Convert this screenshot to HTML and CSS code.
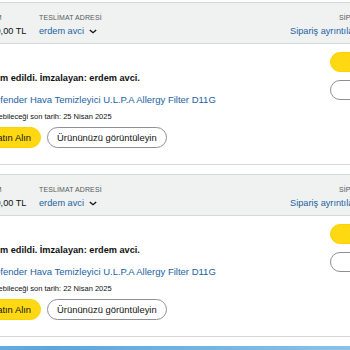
FILE: index.html
```html
<!DOCTYPE html>
<html lang="tr">
<head>
<meta charset="utf-8">
<link rel="stylesheet" href="styles.css">
</head>
<body>
<div class="page">
  <div class="order">
    <div class="order-head">
      <div class="hcol c-date"><div class="label">SİPARİŞ VERİLDİ</div><div class="val">21 Mart 2025</div></div>
      <div class="hcol c-total"><div class="label">TOPLAM</div><div class="val">12.590,00 TL</div></div>
      <div class="hcol c-ship"><div class="label">TESLİMAT ADRESİ</div><div class="val link">erdem avci <svg class="chev" viewBox="0 0 10 6" width="8" height="5"><path d="M1 1l4 3.5L9 1" fill="none" stroke="#0f1111" stroke-width="1.6"/></svg></div></div>
      <div class="hcol c-id"><div class="label id-label">SİPARİŞ # 406-1234567-7654321</div><div class="val link">Sipariş ayrıntılarını görüntüle</div></div>
    </div>
    <div class="order-body">
      <div class="main">
        <div class="status">Siparişiniz kapınıza teslim edildi. İmzalayan: erdem avci.</div>
        <div class="item">
          <div class="thumb"></div>
          <div class="info">
            <a class="title">Karcher Defender Hava Temizleyici U.L.P.A Allergy Filter D11G</a>
            <div class="return">Ürün iade edilebileceği son tarih: 25 Nisan 2025</div>
            <div class="btns">
              <span class="btn yellow">Tekrar Satın Alın</span>
              <span class="btn outline">Ürününüzü görüntüleyin</span>
            </div>
          </div>
        </div>
      </div>
      <div class="actions">
        <span class="btn yellow wide">Paket takibi</span>
        <span class="btn outline wide">İade veya değişim</span>
      </div>
    </div>
  </div>

  <div class="order">
    <div class="order-head">
      <div class="hcol c-date"><div class="label">SİPARİŞ VERİLDİ</div><div class="val">18 Mart 2025</div></div>
      <div class="hcol c-total"><div class="label">TOPLAM</div><div class="val">12.590,00 TL</div></div>
      <div class="hcol c-ship"><div class="label">TESLİMAT ADRESİ</div><div class="val link">erdem avci <svg class="chev" viewBox="0 0 10 6" width="8" height="5"><path d="M1 1l4 3.5L9 1" fill="none" stroke="#0f1111" stroke-width="1.6"/></svg></div></div>
      <div class="hcol c-id"><div class="label id-label">SİPARİŞ # 406-7654321-1234567</div><div class="val link">Sipariş ayrıntılarını görüntüle</div></div>
    </div>
    <div class="order-body">
      <div class="main">
        <div class="status">Siparişiniz kapınıza teslim edildi. İmzalayan: erdem avci.</div>
        <div class="item">
          <div class="thumb"></div>
          <div class="info">
            <a class="title">Karcher Defender Hava Temizleyici U.L.P.A Allergy Filter D11G</a>
            <div class="return">Ürün iade edilebileceği son tarih: 22 Nisan 2025</div>
            <div class="btns">
              <span class="btn yellow">Tekrar Satın Alın</span>
              <span class="btn outline">Ürününüzü görüntüleyin</span>
            </div>
          </div>
        </div>
      </div>
      <div class="actions">
        <span class="btn yellow wide">Paket takibi</span>
        <span class="btn outline wide">İade veya değişim</span>
      </div>
    </div>
  </div>
  <div class="banner"></div>
</div>
</body>
</html>
```

FILE: styles.css
```css
html, body {
  margin: 0;
  padding: 0;
  overflow: hidden;
  background: #ffffff;
}
body {
  font-family: "Liberation Sans", Arial, sans-serif;
  color: #0f1111;
}
.page {
  width: 751px;
  margin-left: -250px;
  padding-top: 2px;
}
.order {
  border: 1px solid #d5d9d9;
  border-radius: 8px;
  overflow: hidden;
  margin-bottom: 9px;
  background: #fff;
}
.order-head {
  background: #f0f2f2;
  border-bottom: 1px solid #d5d9d9;
  height: 41px;
  display: flex;
  align-items: flex-start;
  padding-top: 10px;
  box-sizing: border-box;
  padding-left: 130px;
}
.hcol { display: flex; flex-direction: column; gap: 3px; white-space: nowrap; }
.c-date { width: 91.5px; }
.c-total { width: 66.5px; }
.c-ship { width: 251px; }
.label {
  font-size: 7px;
  color: #565959;
  letter-spacing: 0.1px;
  line-height: 9px;
}
.val {
  font-size: 9.2px;
  line-height: 12px;
  color: #0f1111;
}
.val.link { color: #2162a1; }
.chev { margin-left: 2px; vertical-align: middle; }
.id-label { padding-left: 49px; }
.order-body {
  display: flex;
  justify-content: space-between;
  padding: 27px 0 12px 143.3px;
  height: 120px;
  box-sizing: border-box;
}
.main { white-space: nowrap; }
.status {
  font-size: 9.2px;
  font-weight: bold;
  line-height: 14px;
}
.item {
  display: flex;
  gap: 12px;
  margin-top: 9px;
}
.thumb { width: 46px; height: 46px; flex: none; }
.info { display: flex; flex-direction: column; }
.title {
  color: #2162a1;
  font-size: 9.5px;
  line-height: 12px;
}
.return {
  font-size: 7.5px;
  line-height: 11px;
  margin-top: 5px;
  color: #0f1111;
}
.btns { display: flex; gap: 6px; margin-top: 5px; }
.btn {
  display: inline-flex;
  align-items: center;
  justify-content: center;
  height: 21px;
  box-sizing: border-box;
  border-radius: 11px;
  font-size: 9.4px;
  padding: 0 9px;
  white-space: nowrap;
}
.yellow { background: #ffd814; border: 1px solid #fcd200; }
.outline { background: #fff; border: 1px solid #8d9096; }
.actions {
  display: flex;
  flex-direction: column;
  gap: 8px;
  width: 170px;
  margin-top: -19px;
}
.wide { height: 20px; width: 150px; }
.banner {
  height: 12px;
  background: linear-gradient(90deg, #8ec5ec, #5aa7e0 40%, #9fd0f0);
}
```
